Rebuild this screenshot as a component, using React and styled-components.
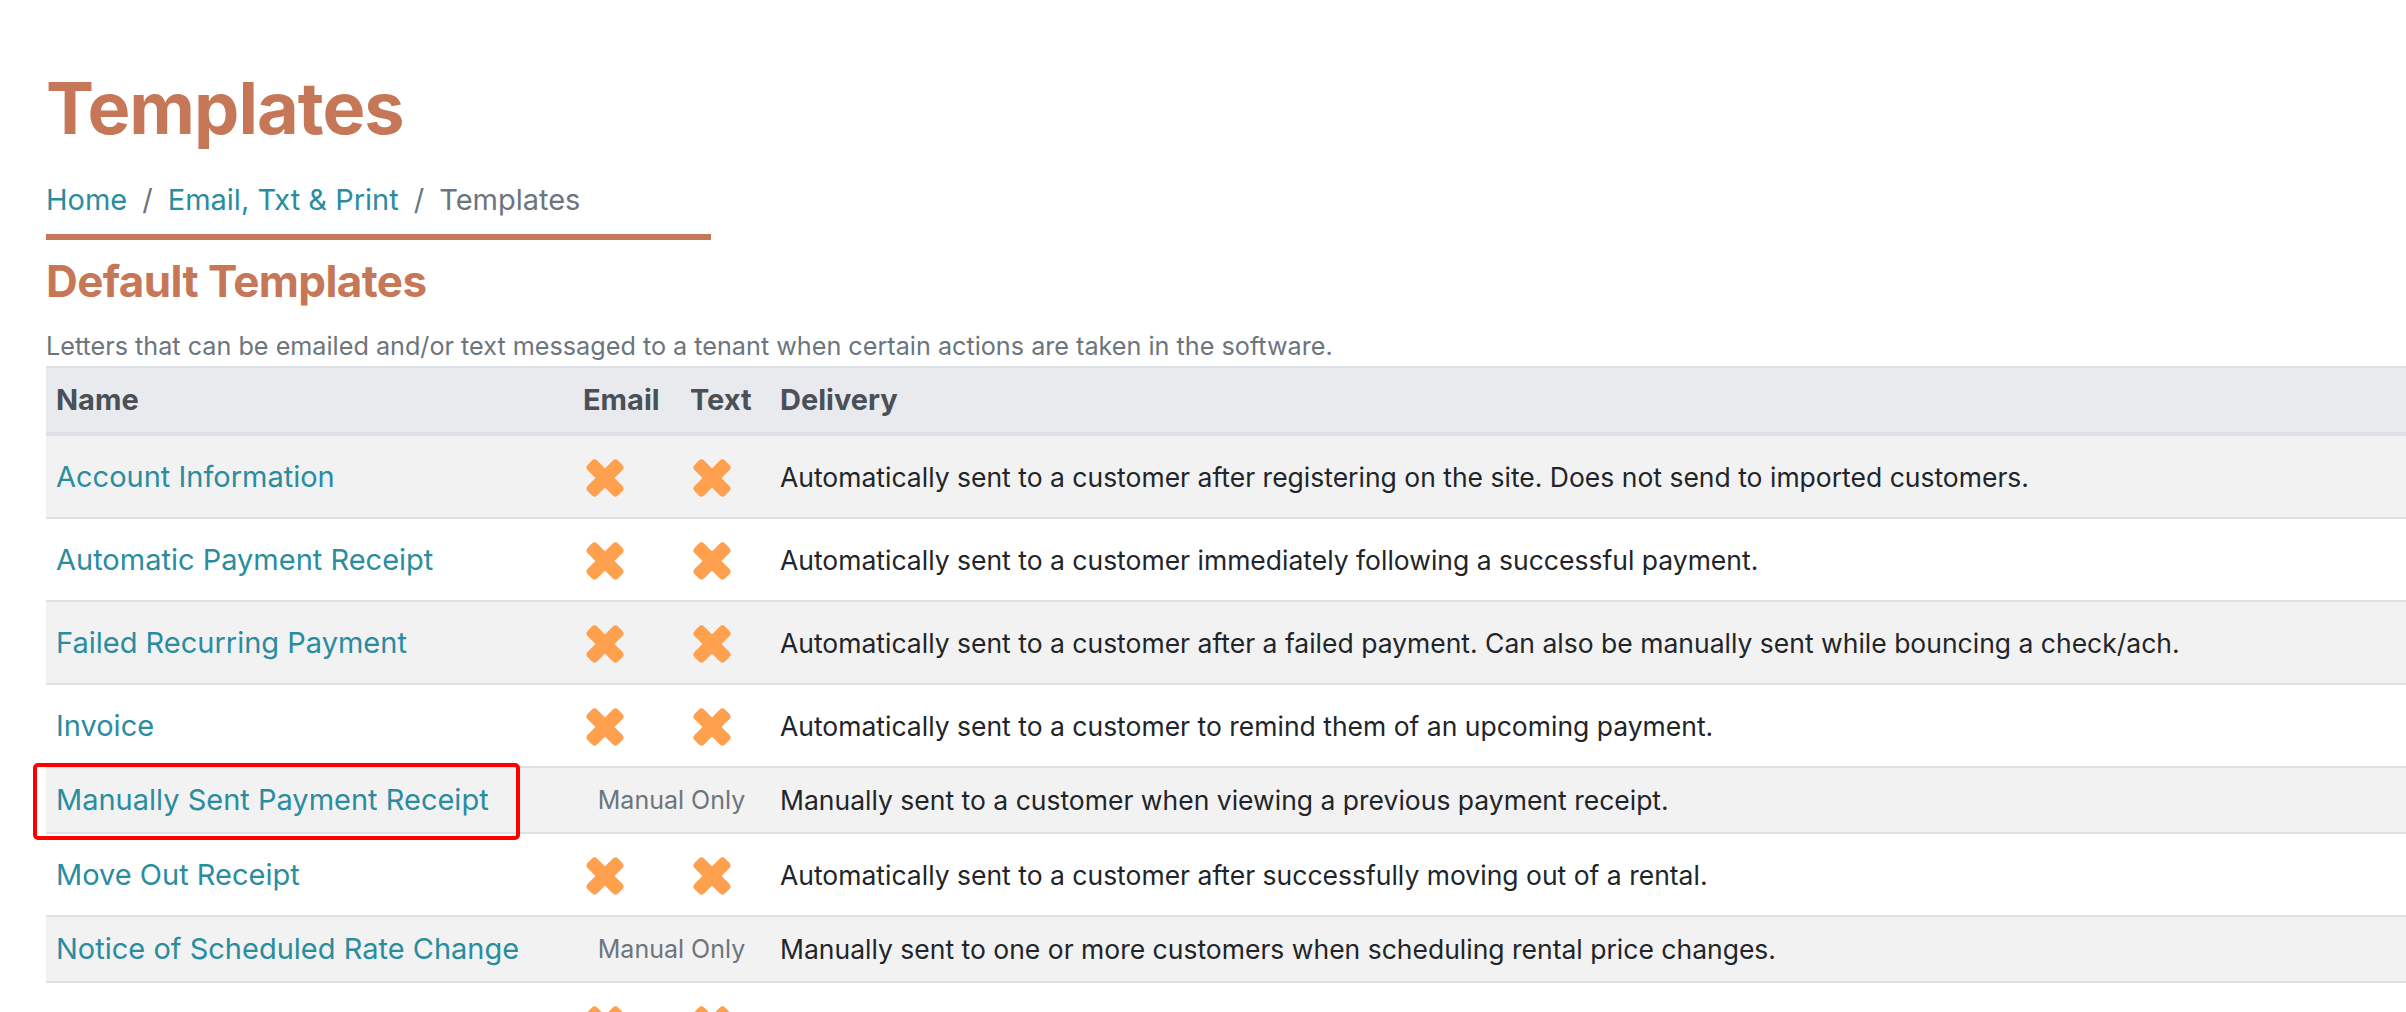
import React from "react";
import styled, { createGlobalStyle } from "styled-components";

const GlobalStyle = createGlobalStyle`
  html, body {
    margin: 0;
    padding: 0;
    background: #fff;
    overflow: hidden;
  }
  body {
    font-family: Inter, "Noto Sans", sans-serif;
    color: #212529;
  }
`;

const templates = [
  {
    name: "Account Information",
    delivery:
      "Automatically sent to a customer after registering on the site. Does not send to imported customers.",
  },
  {
    name: "Automatic Payment Receipt",
    delivery:
      "Automatically sent to a customer immediately following a successful payment.",
  },
  {
    name: "Failed Recurring Payment",
    delivery:
      "Automatically sent to a customer after a failed payment. Can also be manually sent while bouncing a check/ach.",
  },
  {
    name: "Invoice",
    delivery:
      "Automatically sent to a customer to remind them of an upcoming payment.",
  },
  {
    name: "Manually Sent Payment Receipt",
    manual: true,
    highlight: true,
    delivery:
      "Manually sent to a customer when viewing a previous payment receipt.",
  },
  {
    name: "Move Out Receipt",
    delivery:
      "Automatically sent to a customer after successfully moving out of a rental.",
  },
  {
    name: "Notice of Scheduled Rate Change",
    manual: true,
    delivery:
      "Manually sent to one or more customers when scheduling rental price changes.",
  },
  {
    name: "Past Due Notice",
    delivery:
      "Automatically sent to a customer when their account becomes past due.",
  },
];

const Page = styled.div`
  padding: 63px 0 0 46px;
`;

const Title = styled.h1`
  margin: 0;
  font-size: 72px;
  line-height: 90px;
  font-weight: 700;
  color: #c67757;
  letter-spacing: -1px;
`;

const Crumbs = styled.nav`
  display: flex;
  align-items: baseline;
  margin-top: 27px;
  font-size: 29px;
  line-height: 40px;
`;

const CrumbLink = styled.a`
  color: #2a8c9f;
  text-decoration: none;
`;

const CrumbCurrent = styled.span`
  color: #6c757d;
`;

const Slash = styled.span`
  color: #6c757d;
  padding: 0 15px;
`;

const Rule = styled.div`
  width: 665px;
  height: 6px;
  margin-top: 14px;
  background: #c67757;
`;

const Heading = styled.h2`
  margin: 14px 0 0;
  font-size: 44px;
  line-height: 54px;
  font-weight: 700;
  color: #c67757;
  letter-spacing: -0.6px;
`;

const Lead = styled.p`
  margin: 23px 0 0;
  font-size: 25.2px;
  line-height: 30px;
  color: #6c757d;
`;

const Table = styled.table`
  margin-top: 5px;
  width: 100%;
  border-collapse: collapse;
  table-layout: fixed;
`;

const Th = styled.th`
  width: ${(p) => (p.$w ? `${p.$w}px` : "auto")};
  padding: 12px 10px;
  font-size: 29px;
  line-height: 40px;
  font-weight: 700;
  color: #495057;
  text-align: left;
  background: #e9eaed;
  border-top: 2px solid #dee2e6;
  border-bottom: 4px solid #dee2e6;
  white-space: nowrap;
`;

const Row = styled.tr`
  background: ${(p) => (p.$striped ? "#f2f2f2" : "#fff")};
`;

const Td = styled.td`
  position: relative;
  padding: 12px 10px;
  font-size: 26px;
  line-height: 40px;
  vertical-align: middle;
  border-top: 2px solid #dee2e6;
  white-space: nowrap;
`;

const NameCell = styled(Td)`
  font-size: 29px;
`;

const NameLink = styled.a`
  color: #2a8c9f;
  text-decoration: none;
`;

const ManualCell = styled(Td)`
  text-align: center;
  font-size: 25px;
  color: #6c757d;
`;

const DeliveryCell = styled(Td)`
  font-size: 26.5px;
  color: #212529;
`;

const Highlight = styled.span`
  position: absolute;
  left: -13px;
  top: -5px;
  width: 487px;
  height: 77px;
  box-sizing: border-box;
  border: 4px solid #ff0000;
  border-radius: 5px;
  pointer-events: none;
`;

const Cross = styled.svg`
  display: block;
  width: 40px;
  height: 40px;
  margin: 10px 0 7px 2px;
`;

const XMark = () => (
  <Cross viewBox="0 0 40 40" aria-hidden="true">
    <g fill="#ffa04f">
      <rect x="-1.6" y="13.2" width="43.2" height="13.6" rx="4" transform="rotate(45 20 20)" />
      <rect x="-1.6" y="13.2" width="43.2" height="13.6" rx="4" transform="rotate(-45 20 20)" />
    </g>
  </Cross>
);

export default function App() {
  return (
    <>
      <GlobalStyle />
      <Page>
        <Title>Templates</Title>
        <Crumbs>
          <CrumbLink href="#">Home</CrumbLink>
          <Slash>/</Slash>
          <CrumbLink href="#">Email, Txt &amp; Print</CrumbLink>
          <Slash>/</Slash>
          <CrumbCurrent>Templates</CrumbCurrent>
        </Crumbs>
        <Rule />
        <Heading>Default Templates</Heading>
        <Lead>
          Letters that can be emailed and/or text messaged to a tenant when
          certain actions are taken in the software.
        </Lead>
        <Table>
          <thead>
            <tr>
              <Th $w={507}>Name</Th>
              <Th $w={87}>Email</Th>
              <Th $w={70}>Text</Th>
              <Th>Delivery</Th>
            </tr>
          </thead>
          <tbody>
            {templates.map((t, i) => (
              <Row key={t.name} $striped={i % 2 === 0}>
                <NameCell>
                  <NameLink href="#">{t.name}</NameLink>
                  {t.highlight && <Highlight />}
                </NameCell>
                {t.manual ? (
                  <ManualCell colSpan={2}>Manual Only</ManualCell>
                ) : (
                  <>
                    <Td>
                      <XMark />
                    </Td>
                    <Td>
                      <XMark />
                    </Td>
                  </>
                )}
                <DeliveryCell>{t.delivery}</DeliveryCell>
              </Row>
            ))}
          </tbody>
        </Table>
      </Page>
    </>
  );
}
